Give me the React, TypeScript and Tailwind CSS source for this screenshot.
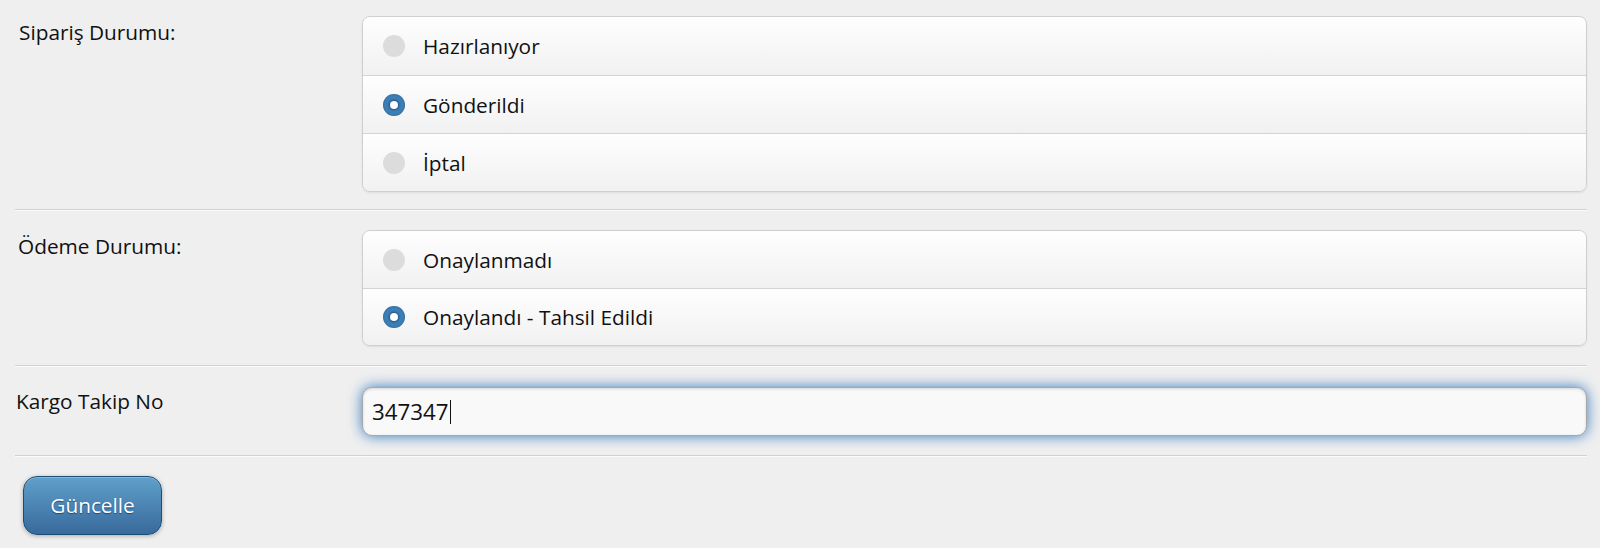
import React from "react";

const font = { fontFamily: '"Open Sans", "Liberation Sans", sans-serif' };

function Radio({ checked }: { checked: boolean }) {
  if (checked) {
    return (
      <span className="flex h-[22px] w-[22px] shrink-0 items-center justify-center rounded-full bg-[#3c7eb6] shadow-[inset_0_0_2px_rgba(0,0,0,0.35)]">
        <span className="h-[8px] w-[8px] rounded-full bg-white shadow-[0_0_2px_1px_rgba(20,60,100,0.7)]" />
      </span>
    );
  }
  return <span className="h-[22px] w-[22px] shrink-0 rounded-full bg-[#dcdcdc]" />;
}

function RadioGroup({ options, selected, rowClass }: { options: string[]; selected: number; rowClass: string }) {
  return (
    <div className="overflow-hidden rounded-[8px] border border-[#cfcfcf] shadow-[0_1px_2px_rgba(0,0,0,0.08)]">
      {options.map((o, i) => (
        <div
          key={o}
          className={`flex ${rowClass} items-center bg-gradient-to-b from-[#fefefe] to-[#f1f1f1] pl-[20px] ${
            i > 0 ? "border-t border-[#d3d3d3]" : ""
          }`}
        >
          <Radio checked={i === selected} />
          <span className="ml-[18px] text-[20.8px] leading-[28px] text-[#111111]">{o}</span>
        </div>
      ))}
    </div>
  );
}

function Separator() {
  return <div className="h-[2px] border-t border-[#d2d2d2] bg-[#fbfbfb]" />;
}

export default function App() {
  return (
    <div className="min-h-[548px] w-full bg-[#efefef] pl-[15px] pr-[13px]" style={font}>
      <div className="grid grid-cols-[347px_1fr] pt-[16px] pb-[17px]">
        <div className="pl-[4px] pt-[2px] text-[20.8px] leading-[28px] text-[#111111]">Sipariş Durumu:</div>
        <RadioGroup options={["Hazırlanıyor", "Gönderildi", "İptal"]} selected={1} rowClass="h-[58px]" />
      </div>
      <Separator />
      <div className="grid grid-cols-[347px_1fr] pt-[19px] pb-[19px]">
        <div className="pl-[3px] pt-[2px] text-[20.8px] leading-[28px] text-[#111111]">Ödeme Durumu:</div>
        <RadioGroup options={["Onaylanmadı", "Onaylandı - Tahsil Edildi"]} selected={1} rowClass="h-[57px]" />
      </div>
      <Separator />
      <div className="grid grid-cols-[347px_1fr] pt-[20px] pb-[19px]">
        <div className="pl-[1px] pt-0 text-[20.8px] leading-[28px] text-[#111111]">Kargo Takip No</div>
        <div className="flex h-[49px] items-center rounded-[10px] border border-[#a8a8a8] bg-[#f9f9f9] pl-[9px] shadow-[0_0_14px_#387bbe,inset_0_1px_3px_rgba(0,0,0,0.15)]">
          <span className="text-[22.3px] leading-[28px] text-[#111111]">347347</span>
          <span className="ml-[1px] h-[24px] w-px bg-[#111]" />
        </div>
      </div>
      <Separator />
      <div className="pl-[8px] pt-[19px] pb-[12px]">
        <button
          className="flex h-[59px] w-[139px] items-center justify-center rounded-[14px] border border-[#1c4f78] bg-gradient-to-b from-[#60a0cb] to-[#386a9c] text-[20.8px] text-white shadow-[0_1px_4px_rgba(0,0,0,0.3),inset_0_1px_0_rgba(255,255,255,0.25)] [text-shadow:0_1px_1px_#1b4b78]"
          style={font}
        >
          Güncelle
        </button>
      </div>
    </div>
  );
}
